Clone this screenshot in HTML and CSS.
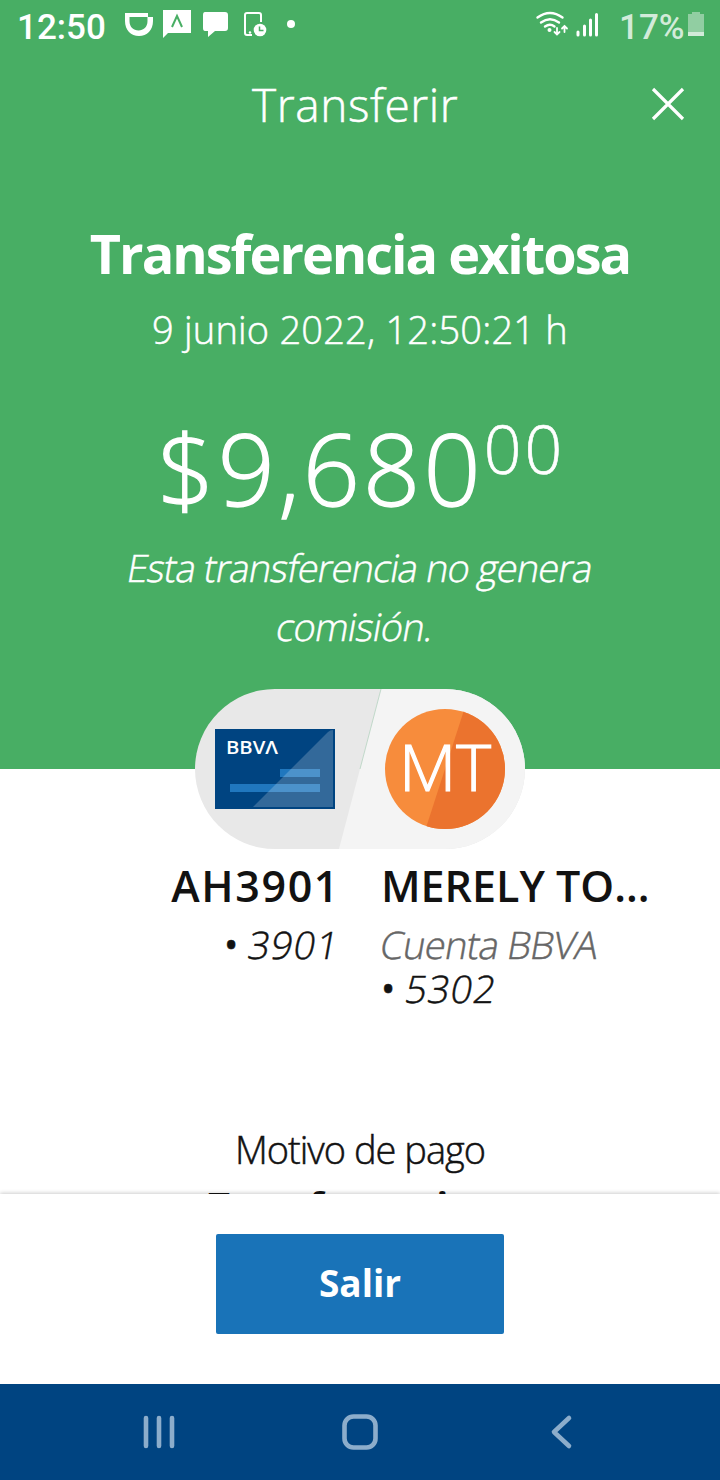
FILE: index.html
```html
<!DOCTYPE html>
<html lang="es">
<head>
    <meta charset="UTF-8">
    <title>Transferir</title>
    <link rel="stylesheet" href="styles.css">
</head>
<body>
    <div class="screen">
        <main class="content">
            <section class="hero">
                <div class="status-bar">
                    <span class="clock">12:50</span>
                    <svg class="status-left" width="180" height="50" viewBox="120 0 180 50">
                        <path fill="#fff" fill-rule="evenodd" d="M125 13h23v4h5v4c0 9-6 15-14 15s-14-6-14-15zM129.500 17v4c0 6 4 9.500 9 9.500s9-3.500 9-9.500v-4z"/>
                        <path fill="#fff" d="M163 10h28v23h-23l-5 5z"/>
                        <path fill="none" stroke="#48ae64" stroke-width="2" d="M172 27l5-11 5 11"/>
                        <path fill="#fff" d="M205 12h20q3 0 3 3v13q0 3-3 3h-10l-7 6v-6h-3q-2 0-2-3V15q0-3 2-3z"/>
                        <path fill="none" stroke="#fff" stroke-width="2" d="M261 22v-7q0-2-2-2h-12q-2 0-2 2v18q0 2 2 2h5"/>
                        <circle cx="260" cy="30" r="6.300" fill="#fff"/>
                        <circle cx="250" cy="32.500" r="1.200" fill="#fff"/>
                        <path fill="none" stroke="#48ae64" stroke-width="1.500" d="M259.500 26.500v4h4"/>
                        <circle cx="291" cy="24" r="4" fill="#fff"/>
                    </svg>
                    <svg class="status-right" width="68" height="50" viewBox="534 0 68 50">
                        <g fill="none" stroke="#fff" stroke-width="2.400" stroke-linecap="round">
                            <path d="M537.500 17.500q12.500-9 25 0M541 22.500q9-6.500 18 0M545 26.500q5-3.500 9.500 0"/>
                            <path stroke-width="1.800" d="M557 28v6M554.500 32l2.500 2.500 2.500-2.500M564.500 32v-6M562 28.500l2.500-2.500 2.500 2.500"/>
                            <path stroke-width="3" d="M578 32v3M584.500 26v9M590.500 20v15M596.500 14.500v20.500"/>
                        </g>
                        <circle cx="549.500" cy="30" r="2" fill="#fff"/>
                    </svg>
                    <span class="battery-level">17%</span>
                    <svg class="battery" width="16" height="24" viewBox="0 0 16 24">
                        <path fill="#91cea2" d="M0 2h4V0h8v2h4v18H0z"/>
                        <path fill="#d2ebd9" d="M0 20h16v4H0z"/>
                    </svg>
                </div>

                <header class="header">
                    <span class="header-title">Transferir</span>
                    <svg class="close" width="34" height="34" viewBox="0 0 34 34">
                        <path fill="none" stroke="#fff" stroke-width="3.200" d="M2 2l30 30M32 2L2 32"/>
                    </svg>
                </header>

                <h1>Transferencia exitosa</h1>
                <p class="date">9 junio 2022, 12:50:21 h</p>
                <p class="amount">$9,680<span class="cents">00</span></p>
                <p class="note">
                    <span class="slant">Esta transferencia no genera</span>
                    <span class="slant last-line">comisión.</span>
                </p>
            </section>

            <svg class="pill" width="330" height="160" viewBox="0 0 330 160">
                <defs>
                    <clipPath id="pillShape"><rect width="330" height="160" rx="80"/></clipPath>
                    <clipPath id="avatarShape"><circle cx="250" cy="80" r="60"/></clipPath>
                </defs>
                <g clip-path="url(#pillShape)">
                    <rect width="330" height="160" fill="#e8e8e8"/>
                    <path fill="#f4f4f4" d="M186 0h144v160H144z"/>
                    <path stroke="#b5d3c0" stroke-width=".8" d="M186 0l-21 80"/>
                </g>
                <!-- card -->
                <rect x="20" y="40" width="120" height="80" fill="#004481"/>
                <path fill="#2077be" d="M85 80h40v8H85zM35 95h90v8H35z"/>
                <path fill="#fff" fill-opacity=".2" d="M58 118l75-75q2-2 5-2v77z"/>
                <text class="card-logo" x="31" y="64.500" textLength="52" lengthAdjust="spacingAndGlyphs">BBVΛ</text>
                <!-- avatar -->
                <g clip-path="url(#avatarShape)">
                    <rect x="190" y="20" width="120" height="120" fill="#f78c3c"/>
                    <path fill="#eb732e" d="M271 15h45v130h-87z"/>
                </g>
                <text class="initials" x="250" y="102" text-anchor="middle" textLength="92" lengthAdjust="spacingAndGlyphs">MT</text>
            </svg>

            <section class="accounts">
                <div class="origin">
                    <div class="name">AH3901</div>
                    <div class="number"><span class="dot">•</span><span class="slant">3901</span></div>
                </div>
                <div class="target">
                    <div class="name">MERELY TO...</div>
                    <div class="bank"><span class="slant">Cuenta BBVA</span></div>
                    <div class="number"><span class="dot">•</span><span class="slant">5302</span></div>
                </div>
            </section>

            <section class="reason">
                <div class="reason-label">Motivo de pago</div>
                <div class="reason-text">Transfer a mi cta</div>
            </section>
        </main>

        <footer class="actions">
            <button class="exit-btn">Salir</button>
        </footer>

        <nav class="nav-bar">
            <svg width="720" height="96" viewBox="0 0 720 96">
                <g fill="none" stroke="#8cadcb" stroke-width="4.600" stroke-linecap="round" stroke-linejoin="round">
                    <path d="M146 34v28M159 34v28M172 34v28"/>
                    <rect x="344.500" y="32.500" width="31" height="31" rx="9"/>
                    <path d="M569 34l-15 14 15 14"/>
                </g>
            </svg>
        </nav>
    </div>
</body>
</html>
```

FILE: styles.css
```css
* { box-sizing: border-box; }
body { margin: 0; font-family: "Open Sans", "Noto Sans", sans-serif; background: #fff; color: #121212; }
h1, p { margin: 0; }
svg { display: block; }
.screen { display: flex; flex-direction: column; width: 720px; height: 1480px; overflow: hidden; }
.content { flex: 1; min-height: 0; overflow: hidden; }

.hero { height: 769px; background: #48ae64; color: #fff; text-align: center; }
.status-bar { display: flex; height: 50px; padding-left: 17px; }
.clock { width: 103px; font: 500 35px/55px Roboto, sans-serif; text-align: left; white-space: nowrap; }
.status-right { margin-left: 234px; }
.battery-level { width: 86px; padding-left: 17px; font: 500 35px/55px Roboto, sans-serif; color: #d2ebd9; text-align: left; white-space: nowrap; }
.battery { margin-top: 12px; }

.header { display: flex; align-items: center; justify-content: space-between; height: 108px; padding: 0 35px 0 252px; }
.header-title { font-size: 46px; font-weight: 300; line-height: 106px; letter-spacing: 0.6px; }
h1 { margin-top: 60px; font-size: 54px; font-weight: 700; line-height: 70px; letter-spacing: -2px; }
.date { margin-top: 16px; font-size: 38px; font-weight: 300; line-height: 50px; letter-spacing: 0.2px; }
.amount { margin-top: 58px; padding-left: 3px; font-size: 100px; font-weight: 300; line-height: 110px; height: 110px; letter-spacing: 3.2px; }
.cents { font-size: 66px; line-height: 0; vertical-align: 32px; }
.note { margin-top: 16px; font-size: 38px; font-weight: 300; line-height: 59px; letter-spacing: -0.9px; }
.header-title, .date, .note, .bank, .number, .reason-label { -webkit-text-stroke: 0.5px; }
.amount { -webkit-text-stroke: 1.4px; }
.cents { -webkit-text-stroke: 0.6px; }
.slant { display: inline-block; transform: skewX(-10deg); }
.note .slant { display: block; }
.note .last-line { padding-right: 10px; letter-spacing: -0.7px; }

.pill { position: relative; margin: -80px auto 0; }
.card-logo { font-size: 18px; font-weight: 600; fill: #fff; }
.initials { font-size: 64px; font-weight: 300; fill: #fff; stroke: #fff; stroke-width: 1.2px; }

.accounts { display: grid; grid-template-columns: 340px 1fr; column-gap: 41px; height: 160px; padding-top: 7px; }
.origin { text-align: right; }
.name { margin-bottom: 6px; font-size: 43px; font-weight: 600; line-height: 60px; white-space: nowrap; }
.origin .name { letter-spacing: 1.6px; }
.bank, .number { font-size: 38px; font-weight: 300; line-height: 44px; }
.bank { color: #666; letter-spacing: -0.7px; }
.number { letter-spacing: 1px; }
.dot { margin-right: 10px; font-weight: 500; }

.reason { margin-top: 118px; text-align: center; line-height: 44px; font-size: 38px; }
.reason-label { letter-spacing: -1px; font-weight: 300; }
.reason-text { margin-top: 12px; font-weight: 700; letter-spacing: -1px; }

.actions { position: relative; height: 190px; padding-top: 40px; background: #fff; box-shadow: 0 -1px 4px rgba(0, 0, 0, .2); }
.exit-btn { display: block; width: 288px; height: 100px; margin: 0 auto; border: none; border-radius: 2px; background: #1973b8; color: #fff; font: 700 37px/98px "Open Sans", sans-serif; padding: 0 0 2px; }
.nav-bar { position: relative; height: 96px; background: #004481; }
```
